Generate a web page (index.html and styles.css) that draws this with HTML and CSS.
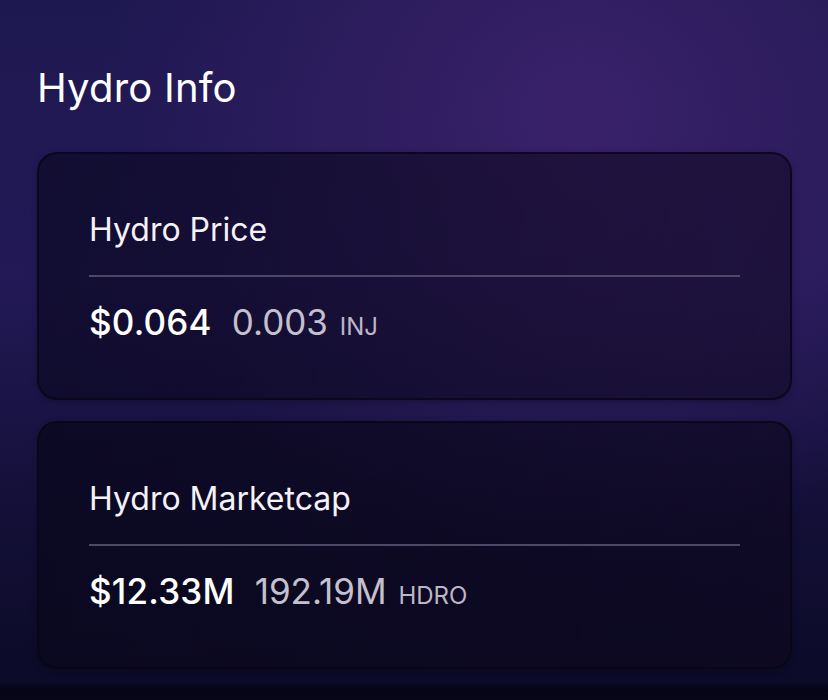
FILE: index.html
```html
<!DOCTYPE html>
<html lang="en">
<head>
  <meta charset="UTF-8">
  <meta name="viewport" content="width=device-width, initial-scale=1.0">
  <title>Hydro Info</title>
  <link rel="stylesheet" href="styles.css">
</head>
<body>
  <main class="page">
    <h1 class="title">Hydro Info</h1>

    <div class="cards">
      <section class="card">
        <h2 class="card-label">Hydro Price</h2>
        <div class="card-value">
          <span class="main">$0.064</span>
          <span class="sub">0.003 <small>INJ</small></span>
        </div>
      </section>

      <section class="card card-dark">
        <h2 class="card-label">Hydro Marketcap</h2>
        <div class="card-value">
          <span class="main">$12.33M</span>
          <span class="sub">192.19M <small>HDRO</small></span>
        </div>
      </section>
    </div>
  </main>
</body>
</html>
```

FILE: styles.css
```css
html, body {
  height: 100%;
}
body {
  margin: 0;
  font-family: 'Inter', 'Noto Sans', sans-serif;
  color: #ffffff;
  background-color: #150f38;
  background-image:
    linear-gradient(to bottom, rgba(4, 3, 14, 0) 97.6%, rgba(4, 3, 14, 0.75) 98.6%, rgba(4, 3, 14, 0.55) 100%),
    radial-gradient(ellipse 480px 440px at 580px 110px, rgba(60, 34, 108, 0.9), rgba(60, 34, 108, 0) 100%),
    linear-gradient(to bottom, #1e1850 0%, #221956 40%, #130f36 75%, #0b0a26 100%);
  overflow: hidden;
}
.page {
  padding: 64px 36px 0 37px;
}
.title {
  margin: 0 0 40px;
  font-size: 40px;
  font-weight: 400;
  line-height: 48px;
  letter-spacing: 0.2px;
}
.cards {
  display: flex;
  flex-direction: column;
  gap: 21px;
}
.card {
  height: 248px;
  box-sizing: border-box;
  padding: 57px 50px 0 50px;
  border: 2px solid rgba(8, 6, 22, 0.75);
  border-radius: 20px;
  background: linear-gradient(100deg, rgba(12, 9, 36, 0.72), rgba(18, 10, 34, 0.55));
  box-shadow: 0 2px 6px rgba(0, 0, 0, 0.25);
}
.card-dark {
  background: linear-gradient(100deg, rgba(10, 8, 30, 0.8), rgba(14, 8, 30, 0.62));
}
.card-label {
  margin: 0;
  padding-bottom: 26px;
  border-bottom: 2px solid #4f4766;
  font-size: 32px;
  font-weight: 400;
  line-height: 38px;
  color: #f4f2f8;
}
.card-value {
  display: flex;
  align-items: baseline;
  gap: 20px;
  margin-top: 25px;
  line-height: 40px;
}
.card-value .main {
  font-size: 35px;
  font-weight: 500;
  letter-spacing: 0.2px;
}
.card-value .sub {
  font-size: 35px;
  font-weight: 400;
  color: #c4c0cd;
}
.card-value small {
  font-size: 24px;
  margin-left: 2px;
  color: #bcb7c6;
}
```
